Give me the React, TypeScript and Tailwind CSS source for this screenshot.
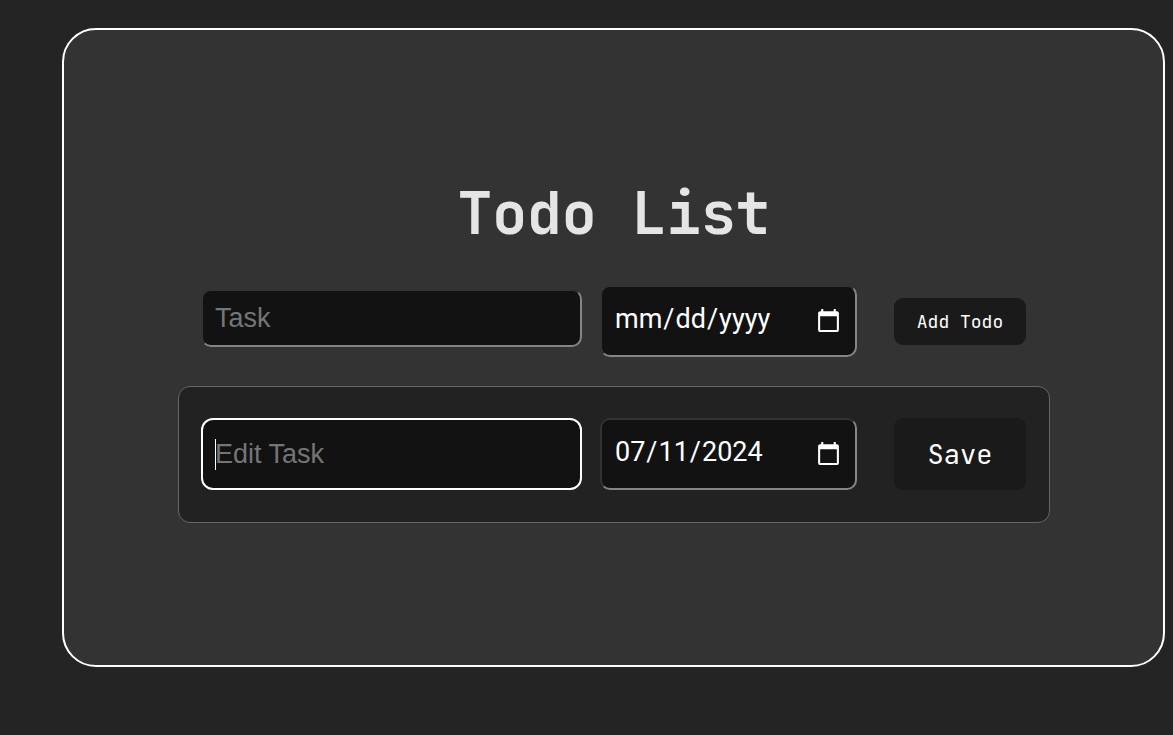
import { useState } from "react";

const field =
  "w-full rounded-[10px] border-2 border-t-[#323232] border-l-[#323232] border-r-[#858585] border-b-[#858585] bg-[#121212] pl-3 text-[27px] text-white outline-none placeholder:text-[#757575]";

const dateField = `${field} h-[72px] pr-[11px] font-[Roboto,sans-serif] [&::-webkit-datetime-edit]:pb-1`;

export default function App() {
  const [task, setTask] = useState("");
  const [date, setDate] = useState("");
  const [editTask, setEditTask] = useState("");
  const [editDate, setEditDate] = useState("2024-07-11");

  return (
    <div className="flex min-h-screen flex-col bg-[#242424] pt-7 pr-2 pb-[68px] pl-[62px] [color-scheme:dark]">
      <main className="flex grow flex-col items-center justify-center rounded-[34px] border-2 border-white bg-[#333333] pt-[9px] pr-[113px] pl-[114px]">
        <h1 className="mb-10 font-['JetBrains_Mono','DejaVu_Sans_Mono',monospace] text-[58px] leading-[64px] font-bold text-[#e5e5e5]">
          Todo List
        </h1>
        <form
          className="flex w-full items-center pr-6 pl-[23px]"
          onSubmit={(e) => e.preventDefault()}
        >
          <div className="mr-[18px] flex-[381] pb-[6px]">
            <input
              aria-label="Task"
              placeholder="Task"
              value={task}
              onChange={(e) => setTask(e.target.value)}
              className={`${field} block h-[58px] font-['Liberation_Sans',Arial,sans-serif]`}
            />
          </div>
          <div className="mr-[37px] flex-[257]">
            <input
              type="date"
              aria-label="Due date"
              value={date}
              onChange={(e) => setDate(e.target.value)}
              className={dateField}
            />
          </div>
          <button
            type="submit"
            className="h-[47px] flex-[132] rounded-[9px] bg-[#1a1a1a] font-['JetBrains_Mono','DejaVu_Sans_Mono',monospace] text-[18px] text-white"
          >
            Add Todo
          </button>
        </form>
        <form
          className="mt-[29px] flex w-full items-center rounded-xl border border-[#666666] bg-[#222222] pt-[31px] pr-[23px] pb-8 pl-[22px]"
          onSubmit={(e) => e.preventDefault()}
        >
          <div className="relative mr-[18px] flex-[381]">
            <input
              autoFocus
              aria-label="Edit task"
              placeholder="Edit Task"
              value={editTask}
              onChange={(e) => setEditTask(e.target.value)}
              className="peer block h-[72px] w-full rounded-[12px] border-2 border-white bg-[#121212] pl-3 font-['Liberation_Sans',Arial,sans-serif] text-[27px] text-white outline-none placeholder:text-[#757575] placeholder-shown:caret-transparent"
            />
            <span
              aria-hidden="true"
              className="pointer-events-none absolute top-[21px] left-[14px] hidden h-[31px] w-px bg-white peer-placeholder-shown:block"
            />
          </div>
          <div className="mr-[37px] flex-[257]">
            <input
              type="date"
              aria-label="Edit due date"
              value={editDate}
              onChange={(e) => setEditDate(e.target.value)}
              className={dateField}
            />
          </div>
          <button
            type="submit"
            className="h-[72px] flex-[132] rounded-[9px] bg-[#1a1a1a] font-['JetBrains_Mono','DejaVu_Sans_Mono',monospace] text-[27px] text-white"
          >
            Save
          </button>
        </form>
      </main>
    </div>
  );
}
